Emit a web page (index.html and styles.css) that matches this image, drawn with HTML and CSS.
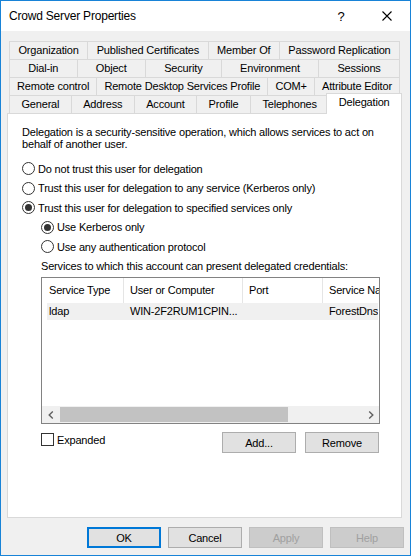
FILE: index.html
```html
<!DOCTYPE html>
<html lang="en">
<head>
<meta charset="utf-8">
<title>Crowd Server Properties</title>
<link rel="stylesheet" href="styles.css">
</head>
<body>
<div class="window">
  <div class="titlebar">
    <span class="title">Crowd Server Properties</span>
    <div class="caption-btn help">?</div>
    <div class="caption-btn close">
      <svg width="10" height="10" viewBox="0 0 10 10"><path d="M0.5 0.5 L9.5 9.5 M9.5 0.5 L0.5 9.5" stroke="#000" stroke-width="1.1" fill="none"/></svg>
    </div>
  </div>
  <div class="content">
    <div class="tabs">
      <div class="tab-row">
        <div class="tab">Organization</div>
        <div class="tab">Published Certificates</div>
        <div class="tab">Member Of</div>
        <div class="tab">Password Replication</div>
      </div>
      <div class="tab-row">
        <div class="tab">Dial-in</div>
        <div class="tab">Object</div>
        <div class="tab">Security</div>
        <div class="tab">Environment</div>
        <div class="tab">Sessions</div>
      </div>
      <div class="tab-row">
        <div class="tab">Remote control</div>
        <div class="tab">Remote Desktop Services Profile</div>
        <div class="tab">COM+</div>
        <div class="tab">Attribute Editor</div>
      </div>
      <div class="tab-row">
        <div class="tab">General</div>
        <div class="tab">Address</div>
        <div class="tab">Account</div>
        <div class="tab">Profile</div>
        <div class="tab">Telephones</div>
        <div class="tab selected">Delegation</div>
      </div>
    </div>
    <div class="panel">
      <p class="desc">Delegation is a security-sensitive operation, which allows services to act on behalf of another user.</p>
      <div class="options">
        <div class="radio-row"><span class="radio"></span><span>Do not trust this user for delegation</span></div>
        <div class="radio-row"><span class="radio"></span><span>Trust this user for delegation to any service (Kerberos only)</span></div>
        <div class="radio-row"><span class="radio checked"></span><span>Trust this user for delegation to specified services only</span></div>
        <div class="indent">
          <div class="radio-row"><span class="radio checked"></span><span>Use Kerberos only</span></div>
          <div class="radio-row"><span class="radio"></span><span>Use any authentication protocol</span></div>
          <div class="services-label">Services to which this account can present delegated credentials:</div>
          <div class="listview">
            <div class="lv-header">
              <div class="lv-hcell h1">Service Type</div>
              <div class="lv-hcell h2">User or Computer</div>
              <div class="lv-hcell h3">Port</div>
              <div class="lv-hcell h4">Service Name</div>
            </div>
            <div class="lv-body">
              <div class="lv-row">
                <div class="lv-cell r1">ldap</div>
                <div class="lv-cell r2">WIN-2F2RUM1CPIN...</div>
                <div class="lv-cell r3"></div>
                <div class="lv-cell r4">ForestDnsZones</div>
              </div>
            </div>
            <div class="hscroll">
              <div class="sb-arrow"><svg width="6" height="8" viewBox="0 0 6 8"><path d="M4.8 0.6 L1.2 4 L4.8 7.4" stroke="#606060" stroke-width="1.4" fill="none"/></svg></div>
              <div class="sb-track"><div class="sb-thumb"></div></div>
              <div class="sb-arrow"><svg width="6" height="8" viewBox="0 0 6 8"><path d="M1.2 0.6 L4.8 4 L1.2 7.4" stroke="#606060" stroke-width="1.4" fill="none"/></svg></div>
            </div>
          </div>
          <div class="list-actions">
            <div class="check-row"><span class="checkbox"></span><span>Expanded</span></div>
            <div class="action-btns">
              <button class="btn">Add...</button>
              <button class="btn">Remove</button>
            </div>
          </div>
        </div>
      </div>
    </div>
  </div>
  <div class="footer">
    <button class="btn default">OK</button>
    <button class="btn">Cancel</button>
    <button class="btn disabled">Apply</button>
    <button class="btn disabled">Help</button>
  </div>
</div>
</body>
</html>
```
FILE: styles.css
```css
* { box-sizing: border-box; }
html, body { margin: 0; padding: 0; }
body {
  font-family: "Liberation Sans", Arial, sans-serif;
  font-size: 11px;
  letter-spacing: -0.18px;
  color: #000;
  background: #fff;
  overflow: hidden;
}
.window {
  width: 411px;
  height: 556px;
  border: 1px solid #1883d7;
  background: #f0f0f0;
  display: flex;
  flex-direction: column;
  overflow: hidden;
}
.titlebar {
  flex: none;
  height: 30px;
  background: #fff;
  display: flex;
  align-items: center;
}
.title {
  flex: 1;
  padding-left: 8px;
  font-size: 12px;
  letter-spacing: -0.2px;
}
.caption-btn {
  width: 46px;
  height: 30px;
  display: flex;
  align-items: center;
  justify-content: center;
}
.help { font-size: 13px; letter-spacing: 0; }
.content {
  flex: 1;
  display: flex;
  flex-direction: column;
  padding: 10px 8px 0 6px;
}
.tabs { flex: none; margin: 0 2px; }
.tab-row {
  display: flex;
  height: 18px;
  align-items: flex-start;
}
.tab {
  flex: 1 1 auto;
  height: 18px;
  padding: 0 6px;
  border: 1px solid #d9d9d9;
  border-bottom: none;
  margin-left: -1px;
  line-height: 17px;
  text-align: center;
  white-space: nowrap;
  background: #f0f0f0;
}
.tab:first-child { margin-left: 0; }
.tab.selected {
  background: #fff;
  height: 21px;
  margin: -2px -2px 0 -3px;
  line-height: 16px;
  position: relative;
  z-index: 1;
}
.panel {
  flex: 1;
  background: #fff;
  border: 1px solid #d9d9d9;
  padding: 12px 21px 0 14px;
}
.desc { margin: 0; line-height: 12px; }
.options { margin-top: 9px; }
.radio-row {
  display: flex;
  align-items: center;
  gap: 3px;
  height: 19.5px;
  white-space: nowrap;
}
.radio {
  flex: none;
  width: 13px;
  height: 13px;
  border: 1px solid #333;
  border-radius: 50%;
  background: #fff;
  display: flex;
  align-items: center;
  justify-content: center;
}
.radio.checked::after {
  content: "";
  width: 7px;
  height: 7px;
  border-radius: 50%;
  background: #333;
}
.indent { margin-left: 19px; }
.services-label { height: 19.5px; line-height: 19.5px; white-space: nowrap; }
.listview {
  margin-top: 1px;
  width: 339px;
  height: 147px;
  border: 1px solid #828282;
  background: #fff;
  display: flex;
  flex-direction: column;
}
.lv-header {
  flex: none;
  display: flex;
  height: 25px;
  overflow: hidden;
}
.lv-hcell {
  flex: none;
  border-right: 1px solid #e5e5e5;
  padding-left: 6px;
  line-height: 25px;
  white-space: nowrap;
  overflow: hidden;
}
.h1 { width: 82px; padding-left: 7px; }
.h2 { width: 119px; }
.h3 { width: 80px; }
.h4 { width: 100px; }
.lv-body { flex: 1; overflow: hidden; }
.lv-row {
  display: flex;
  height: 17px;
  margin: 0 1px 0 5px;
  background: #f0f0f0;
  overflow: hidden;
  line-height: 17px;
  white-space: nowrap;
}
.lv-cell { flex: none; padding-left: 6px; overflow: hidden; }
.r1 { width: 77px; padding-left: 2px; }
.r2 { width: 119px; }
.r3 { width: 80px; }
.r4 { width: 100px; }
.hscroll {
  flex: none;
  height: 17px;
  background: #f0f0f0;
  display: flex;
}
.sb-arrow {
  flex: none;
  width: 17px;
  height: 17px;
  display: flex;
  align-items: center;
  justify-content: center;
}
.sb-track { flex: 1; padding: 1px 0 1px 1px; }
.sb-thumb { width: 228px; height: 15px; background: #c2c2c2; }
.list-actions {
  width: 339px;
  margin-top: 8px;
  display: flex;
  justify-content: space-between;
  align-items: flex-start;
}
.check-row {
  display: flex;
  align-items: center;
  gap: 3px;
  height: 13px;
  margin-top: 1px;
}
.checkbox {
  flex: none;
  width: 13px;
  height: 13px;
  border: 1px solid #333;
  background: #fff;
}
.action-btns { display: flex; gap: 9px; margin-right: 1px; }
.btn {
  width: 74px;
  height: 21px;
  padding: 0;
  border: 1px solid #adadad;
  background: #e1e1e1;
  color: #000;
  font: inherit;
  letter-spacing: inherit;
}
.btn.default { border: 2px solid #0078d7; }
.btn.disabled { background: #cccccc; border-color: #bfbfbf; color: #a0a0a0; }
.footer {
  flex: none;
  display: flex;
  justify-content: flex-end;
  gap: 7px;
  padding: 9px 6px 7px 0;
}
```
